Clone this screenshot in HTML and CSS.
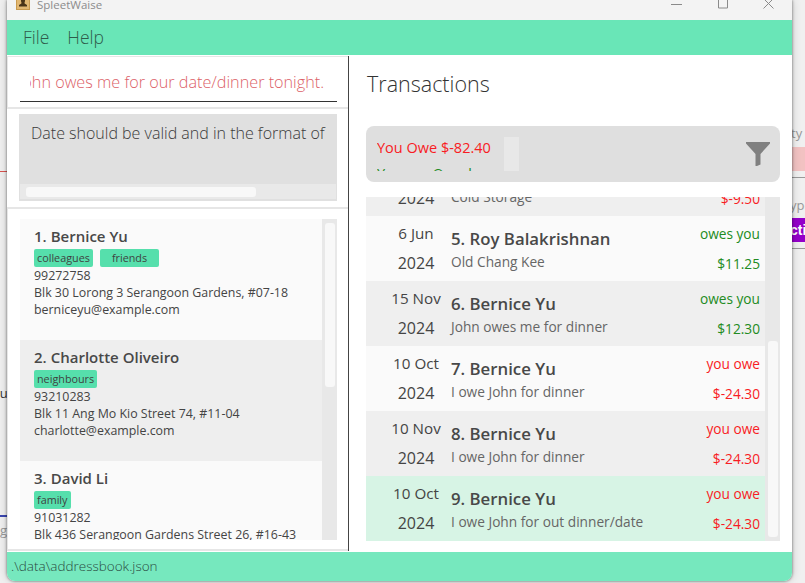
FILE: index.html
```html
<!DOCTYPE html>
<html lang="en">
<head>
<meta charset="utf-8">
<title>SpleetWaise</title>
<link rel="stylesheet" href="styles.css">
</head>
<body>
<div class="backdrop">
  <span class="bd-text bd-ty">ty</span>
  <span class="bd-pink"></span>
  <span class="bd-line bd-line-a"></span>
  <span class="bd-text bd-ype">ype</span>
  <span class="bd-purple">cti</span>
  <span class="bd-line bd-line-b"></span>
  <span class="bd-red"></span>
  <span class="bd-text bd-ou">ou</span>
  <span class="bd-blue"></span>
  <span class="bd-text bd-ng">ng</span>
</div>
<div class="window">
  <header class="titlebar">
    <svg class="app-icon" width="14" height="12" viewBox="0 0 14 12"><rect x="0" y="0" width="14" height="12" fill="#c99a4e"/><rect x="1" y="0" width="12" height="11" fill="#e2b873"/><path d="M7 0.500a2.200 2.200 0 0 1 1.600 3.500v1.400l2.400 1.600v1.500H3V7l2.400-1.600V4A2.200 2.200 0 0 1 7 0.500z" fill="#4a3418"/></svg>
    <span class="app-title">SpleetWaise</span>
    <div class="controls">
      <svg width="11" height="9" viewBox="0 0 11 9"><path d="M0 4.500h11" stroke="#8a8a8a" fill="none"/></svg>
      <svg width="11" height="9" viewBox="0 0 11 9"><path d="M1.500-2h9v10h-9z" stroke="#8a8a8a" fill="none"/></svg>
      <svg width="11" height="9" viewBox="0 0 11 9"><path d="M0.500-1.500L10.500 8.500M10.500-1.500L0.500 8.500" stroke="#8a8a8a" fill="none"/></svg>
    </div>
  </header>
  <nav class="menubar"><span>File</span><span>Help</span></nav>
  <main class="content">
    <section class="left">
      <div class="command">
        <div class="command-input"><div class="command-clip"><span>John owes me for our date/dinner tonight.</span></div></div>
      </div>
      <div class="result-wrap">
        <div class="result">
          <div class="result-text">Date should be valid and in the format of</div>
          <div class="hscroll"><div class="hthumb"></div></div>
        </div>
      </div>
      <div class="list-wrap">
        <div class="people">
          <div class="people-rows">
            <article class="person">
              <h3><span>1.</span><span>Bernice Yu</span></h3>
              <div class="tags"><span class="tag">colleagues</span><span class="tag tag-wide">friends</span></div>
              <p>99272758</p>
              <p>Blk 30 Lorong 3 Serangoon Gardens, #07-18</p>
              <p>berniceyu@example.com</p>
            </article>
            <article class="person alt">
              <h3><span>2.</span><span>Charlotte Oliveiro</span></h3>
              <div class="tags"><span class="tag">neighbours</span></div>
              <p>93210283</p>
              <p>Blk 11 Ang Mo Kio Street 74, #11-04</p>
              <p>charlotte@example.com</p>
            </article>
            <article class="person">
              <h3><span>3.</span><span>David Li</span></h3>
              <div class="tags"><span class="tag">family</span></div>
              <p>91031282</p>
              <p>Blk 436 Serangoon Gardens Street 26, #16-43</p>
            </article>
          </div>
          <div class="vscroll"><div class="vthumb people-thumb"></div></div>
        </div>
      </div>
    </section>
    <section class="right">
      <h1>Transactions</h1>
      <div class="summary">
        <div class="summary-text">
          <div class="owe">You Owe $-82.40</div>
          <div class="owed">You are Owed</div>
        </div>
        <div class="summary-scroll"></div>
        <svg class="filter" width="24" height="24" viewBox="0 0 24 24"><path d="M0 0H24V1.500L14.500 12V22.500L11 24H9.500V12L0 1.500Z" fill="#808080"/></svg>
      </div>
      <div class="txns">
        <div class="txn-rows">
          <article class="txn alt first">
            <div class="date"><span>&nbsp;</span><span>2024</span></div>
            <div class="info"><h3>&nbsp;</h3><p>Cold Storage</p></div>
            <div class="amt red"><span>&nbsp;</span><span>$-9.50</span></div>
          </article>
          <article class="txn">
            <div class="date"><span>6 Jun</span><span>2024</span></div>
            <div class="info"><h3>5. Roy Balakrishnan</h3><p>Old Chang Kee</p></div>
            <div class="amt green"><span>owes you</span><span>$11.25</span></div>
          </article>
          <article class="txn alt">
            <div class="date"><span>15 Nov</span><span>2024</span></div>
            <div class="info"><h3>6. Bernice Yu</h3><p>John owes me for dinner</p></div>
            <div class="amt green"><span>owes you</span><span>$12.30</span></div>
          </article>
          <article class="txn">
            <div class="date"><span>10 Oct</span><span>2024</span></div>
            <div class="info"><h3>7. Bernice Yu</h3><p>I owe John for dinner</p></div>
            <div class="amt red"><span>you owe</span><span>$-24.30</span></div>
          </article>
          <article class="txn alt">
            <div class="date"><span>10 Nov</span><span>2024</span></div>
            <div class="info"><h3>8. Bernice Yu</h3><p>I owe John for dinner</p></div>
            <div class="amt red"><span>you owe</span><span>$-24.30</span></div>
          </article>
          <article class="txn selected">
            <div class="date"><span>10 Oct</span><span>2024</span></div>
            <div class="info"><h3>9. Bernice Yu</h3><p>I owe John for out dinner/date</p></div>
            <div class="amt red"><span>you owe</span><span>$-24.30</span></div>
          </article>
        </div>
        <div class="vscroll"><div class="vthumb txn-thumb"></div></div>
      </div>
    </section>
  </main>
  <footer class="statusbar">.\data\addressbook.json</footer>
</div>
</body>
</html>
```
FILE: styles.css
```css
* { box-sizing: border-box; }
html, body { margin: 0; height: 100%; }
body {
  position: relative;
  width: 805px;
  height: 583px;
  overflow: hidden;
  background: #f0f0f0;
  font-family: "Open Sans", "Noto Sans", sans-serif;
  color: #444;
}
h1, h3, p { margin: 0; font-weight: inherit; }

/* desktop content showing around the window */
.backdrop { position: absolute; inset: 0; overflow: hidden; }
.bd-text { position: absolute; font-size: 13px; line-height: 18px; color: #999; }
.bd-ty { left: 791px; top: 124px; }
.bd-ype { left: 790px; top: 196px; }
.bd-ou { left: -8px; top: 384px; color: #333; }
.bd-ng { left: -8px; top: 521px; }
.bd-pink { position: absolute; left: 792px; top: 147px; width: 13px; height: 24px; background: #f2c2c2; }
.bd-purple { position: absolute; left: 792px; top: 218px; width: 13px; height: 24px; overflow: hidden; background: #9400c9; color: #fff; text-indent: -2px; font: 700 14px/24px "Liberation Sans", sans-serif; }
.bd-line { position: absolute; left: 792px; width: 13px; height: 1px; background: #999; }
.bd-line-a { top: 177px; }
.bd-line-b { top: 248px; }
.bd-red { position: absolute; left: 0; top: 171px; width: 7px; height: 1px; background: #d9534f; }
.bd-blue { position: absolute; left: 0; top: 515px; width: 7px; height: 2px; background: #3b46b0; }

.window {
  position: relative;
  display: flex;
  flex-direction: column;
  width: 785px;
  height: 581px;
  margin-left: 7px;
  border-radius: 0 0 8px 8px;
  overflow: hidden;
  box-shadow: 0 0 3px rgba(0, 0, 0, .55), 0 0 10px rgba(0, 0, 0, .18);
  background: #fff;
}
.titlebar {
  display: flex;
  align-items: flex-start;
  height: 20px;
  flex: none;
  padding-left: 9px;
  background: #f3f3f3;
}
.app-icon { margin-top: -2px; }
.app-title { margin: -3px 0 0 7px; font-size: 11.500px; line-height: 16px; color: #8c8c8c; }
.controls { display: flex; gap: 35px; margin-left: auto; margin-right: 18px; }
.menubar {
  display: flex;
  gap: 18px;
  height: 35px;
  flex: none;
  align-items: center;
  padding: 0 0 2px 16px;
  background: #69e6b7;
  font-size: 17.500px;
  font-weight: 300;
  color: #2f5b4b;
}
.content { display: flex; flex: 1; min-height: 0; }
.left {
  display: flex;
  flex-direction: column;
  width: 342px;
  flex: none;
  height: 495px;
  margin-top: 1px;
  border-right: 1px solid #444;
  background: #fff;
}
.command { height: 53px; flex: none; padding: 0 11px 0 12px; border: solid #e6e6e6; border-width: 1px 0 2px 1px; }
.command-input {
  height: 45px;
  padding: 14px 13px 0 10px;
  border-bottom: 1px solid #333;
}
.command-clip {
  display: flex;
  justify-content: flex-end;
  overflow: hidden;
  font-size: 16.200px;
  line-height: 22px;
  font-weight: 300;
  white-space: nowrap;
  color: #dc5f68;
}
.command-clip span { flex: none; }
.result-wrap { height: 100px; flex: none; padding: 5px 11px 0 12px; border-bottom: 2px solid #e6e6e6; }
.result { display: flex; flex-direction: column; justify-content: space-between; height: 87px; background: #e0e0e0; overflow: hidden; }
.result-text { padding: 8px 0 0 12px; font-size: 16px; line-height: 22px; font-weight: 300; color: #3a3a3a; white-space: nowrap; overflow: hidden; }
.hscroll { height: 15px; margin: 0 1px 2px; padding: 3px 0 2px 6px; background: #e9e9e9; }
.hthumb { width: 230px; height: 10px; border-radius: 3px; background: #f8f8f8; }
.list-wrap { flex: 1; min-height: 0; padding: 10px 11px 0 12px; border: solid #e6e6e6; border-width: 0 0 2px 1px; }
.people { display: flex; height: 321px; overflow: hidden; }
.people-rows { flex: 1; min-width: 0; }
.person { height: 121px; padding: 7px 0 0 14px; background: #fafafa; font-size: 12.400px; line-height: 17px; }
.person.alt { background: #eee; }
.person h3 { display: flex; gap: 4px; font-size: 15px; line-height: 20px; font-weight: 600; color: #484848; }
.tags { display: flex; gap: 7px; height: 18px; margin: 3px 0 0; }
.tag { height: 18px; padding: 0 3px; border-radius: 2px; background: #56dfac; font-size: 10.800px; line-height: 18px; color: #3f3f3f; }
.tag-wide { padding: 0 12px; }
.vscroll { width: 15px; flex: none; padding: 4px 2px 0 3px; background: #e8e8e8; }
.vthumb { height: 164px; border-radius: 3px; background: #f8f8f8; }

.right { flex: 1; min-width: 0; padding: 0 12px 0 17px; }
.right h1 { padding: 12px 0 0 1px; font-size: 21.500px; line-height: 34px; font-weight: 300; color: #333; }
.summary {
  display: flex;
  align-items: flex-start;
  height: 56px;
  margin-top: 25px;
  padding-left: 11px;
  border-radius: 8px;
  background: #dfdfdf;
  overflow: hidden;
}
.summary-text { width: 127px; height: 45px; flex: none; overflow: hidden; padding-top: 12px; font-size: 14.500px; line-height: 20px; font-weight: 500; white-space: nowrap; }
.owe { color: #f81c24; }
.owed { margin-top: 6px; color: #228b22; }
.summary-scroll { width: 15px; height: 34px; margin-top: 11px; background: #e8e8e8; }
.filter { margin: 16px 10px 0 auto; }
.txns { display: flex; height: 344px; margin-top: 15px; overflow: hidden; }
.txn-rows { flex: 1; min-width: 0; }
.txn {
  display: grid;
  grid-template-columns: 70px 1fr auto;
  height: 65px;
  padding: 3px 5px 0 15px;
  background: #fafafa;
}
.txn.alt { background: #efefef; }
.txn.selected { background: #d7f4e5; }
.txn.first { margin-top: -46px; }
.date { display: flex; flex-direction: column; align-items: center; font-size: 15.200px; line-height: 29px; white-space: nowrap; color: #444; }
.date span + span { padding-top: 1px; font-size: 16px; }
.info h3 { padding-top: 8px; font-size: 16.800px; line-height: 24px; font-weight: 600; color: #484848; }
.info p { padding-top: 2px; font-size: 13.700px; line-height: 18px; font-weight: 500; color: #666; }
.amt { display: flex; flex-direction: column; align-items: flex-end; font-size: 13.700px; line-height: 29px; font-weight: 500; }
.amt span + span { padding-top: 1px; }
.red { color: #f81c24; }
.green { color: #228b22; }
.txns .vscroll { padding-top: 0; }
.txn-thumb { height: 196px; margin-top: 144px; }
.statusbar {
  height: 29px;
  flex: none;
  padding-left: 4px;
  background: #76e8be;
  font-size: 13.500px;
  line-height: 29px;
  font-weight: 300;
  color: #2a4a3e;
}
```
